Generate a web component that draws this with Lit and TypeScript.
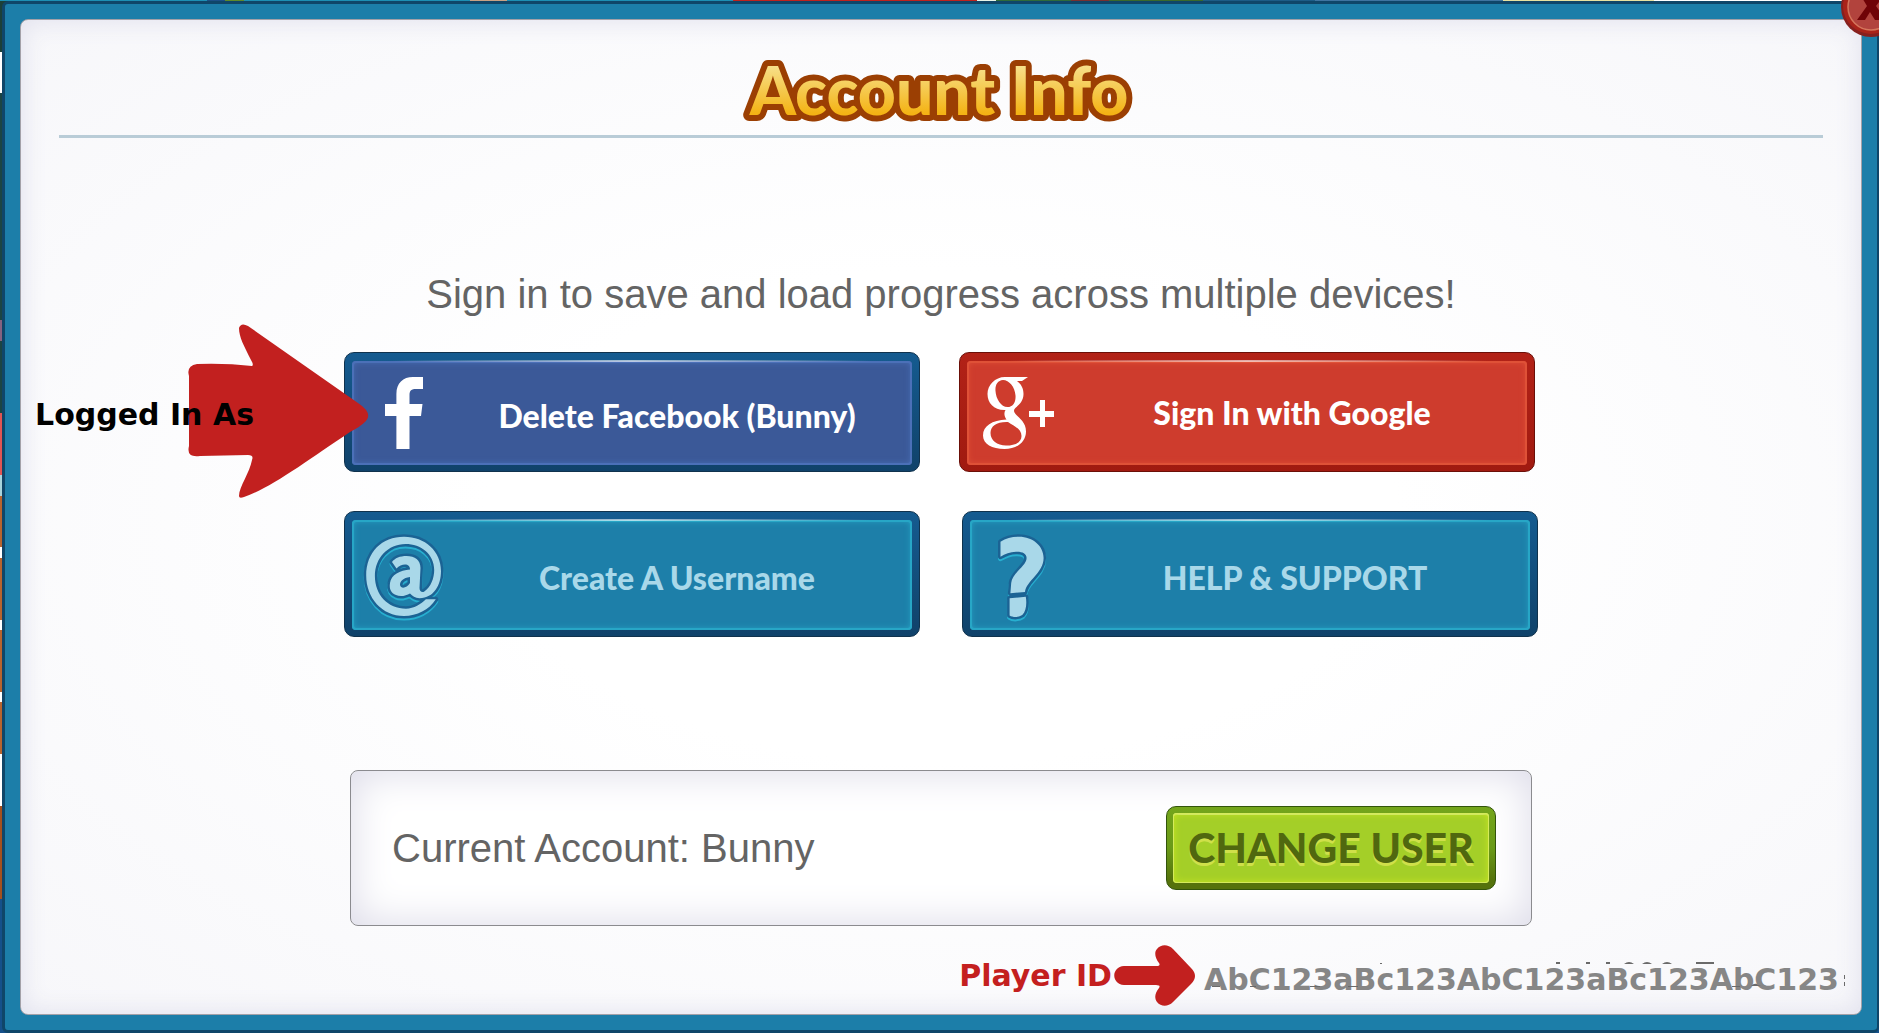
import { LitElement, html, css, svg, TemplateResult } from "lit";
import { customElement, property } from "lit/decorators.js";

const AT_SIGN =
  "M72.8 67.3C66 78 54 84 41 84C19 84 3.2 66 3.2 43.5C3.2 20 19 4.7 41 4.7C62 4.7 78 19 78 39C78 53 71 66 56.5 66.3C52 66 49.5 64 47 61.5C43 64 37 65 33 63C28 61 26 57 27 51C28 43 37 38 47 37.5C47 34 45 32.5 42 32.5C39 32.5 36 34 33.5 36.5L29 30C32 26 37 24 43.5 24C52 24 57.5 28 57.5 36L56.5 56C56.5 59 58.5 60.5 61 59.7C68 55 71.2 46 71.2 38C71.2 22 58 12 42.5 12C25 12 11.9 26 11.9 44C11.9 63 25 76.7 43 76.7C51 76.7 58 72 62.9 67.3ZM47 45C40 46 37 49 37 53C38 57.5 44 56 47 51Z";
const QUESTION =
  "M3.5 9.7C9 6 15 4.7 22 4.7C36 4.7 46.6 14 46.6 26C46.6 41 29 49 28 60L13.4 61.3L14.2 51C15 41 29.6 34 29.6 26C29.6 21.5 25 19.5 19 19.8C13 20 8 22 3.5 24.7ZM12.6 66.3L28.8 64.7C30 72 29 79 25.5 82.8C22.5 85.3 16 85.6 12.6 83.4Z";

function embossed(path: string, width: number) {
  return html`<svg width=${width} height="90" viewBox="0 0 ${width} 90" aria-hidden="true">
    ${svg`
      <g fill-rule="evenodd" stroke-linejoin="round">
        <path d=${path} transform="translate(0 2)" fill="none" stroke="#27afd0" stroke-width="5"/>
        <path d=${path} fill="#1d7fa9" stroke="#1b6394" stroke-width="5"/>
        <path d=${path} fill="#a9d8e9"/>
      </g>`}
  </svg>`;
}

const ICONS: Record<string, TemplateResult> = {
  facebook: html`<svg width="38" height="72" viewBox="0 0 38 72" aria-hidden="true">
    <path fill="#fff" d="M38 0V12H31C26.500 12 24.500 13.500 24.500 18V27H37.500L36 39H24.500V72H11.400V39H0V27H11.400V17C11.400 6 18 0 28 0Z"/>
  </svg>`,
  google: html`<svg width="72" height="72" viewBox="0 0 72 72" aria-hidden="true">
    <path fill="#fff" fill-rule="evenodd" d="M22 0H45L39 4H34C38 7 40.500 11 40.500 17C40.500 23 37 27 33.500 30C31 32 30.500 33.500 31.500 35.500C34 40 43 44 43 54.500C43 65 34 72 21.500 72C9 72 0 67 0 58.500C0 49 9 43 23.500 42.500C21.500 40 20.500 36 22.500 33C11 33.500 4.500 26 4.500 17C4.500 8 12 0 22 0ZM20 3C14.500 3.500 12 8 12.500 14C13 22 18 30 24.500 30C30 30 33 25 32.500 18.500C32 10 26 3 20 3ZM25 45C14 44.500 7.500 49 7.500 56C7.500 63.500 14 68.500 23 68.500C33 68.500 38.500 65 38.500 59C38.500 52 31 49 25 45Z"/>
    <path fill="#fff" d="M57 23H62V34H71V40H62V50H57V40H46V34H57Z"/>
  </svg>`,
  username: embossed(AT_SIGN, 82),
  help: embossed(QUESTION, 50),
};

@customElement("account-button")
class AccountButton extends LitElement {
  @property({ reflect: true }) kind = "facebook";
  @property() label = "";

  static styles = css`
    :host {
      display: block;
      flex: 1;
      --rim-top: #155b90;
      --rim-bottom: #10426a;
      --edge: #10324d;
      --face: #1d7fa9;
      --glow: #27a6c6;
      --ink: #a9d8e9;
    }
    :host([kind="facebook"]) {
      --face: #3b5998;
      --glow: #4b70b8;
      --ink: #fff;
    }
    :host([kind="google"]) {
      --rim-top: #b22217;
      --rim-bottom: #a01a10;
      --edge: #6b0f08;
      --face: #ce3c2d;
      --glow: #df5137;
      --ink: #fff;
    }
    .button {
      display: flex;
      box-sizing: border-box;
      width: 100%;
      height: 100%;
      min-height: 120px;
      margin: 0;
      padding: 8px 7px 6px;
      border: 1px solid var(--edge);
      border-radius: 10px;
      background: linear-gradient(var(--rim-top), var(--rim-bottom));
      color: var(--ink);
      font: 900 32px/40px Lato, "Liberation Sans", sans-serif;
      cursor: pointer;
    }
    .face {
      position: relative;
      display: flex;
      flex: 1;
      align-items: center;
      border-radius: 4px;
      background: var(--face);
      box-shadow: inset 0 0 0 2px var(--glow), inset 0 0 6px 1px var(--glow);
    }
    .face::before {
      content: "";
      position: absolute;
      inset: -1px 40px auto;
      height: 2px;
      background: linear-gradient(90deg, transparent, #ffffffa0, transparent);
    }
    .icon {
      display: flex;
      justify-content: center;
      width: 104px;
    }
    :host([kind="username"]) .icon,
    :host([kind="help"]) .icon {
      padding-top: 4px;
    }
    .label {
      flex: 1;
      padding: 6px 14px 0 0;
      text-align: center;
      white-space: nowrap;
    }
    :host([kind="google"]) .label {
      padding-top: 0;
    }
  `;

  render() {
    return html`<button class="button" type="button">
      <span class="face">
        <span class="icon">${ICONS[this.kind]}</span>
        <span class="label">${this.label}</span>
      </span>
    </button>`;
  }
}

@customElement("app-root")
class AppRoot extends LitElement {
  static styles = css`
    :host {
      display: block;
      font-family: "Liberation Sans", sans-serif;
      color: #646464;
    }
    .scene {
      display: flex;
      box-sizing: border-box;
      min-height: 100vh;
      padding: 1px 0 0 2px;
      overflow: hidden;
      background:
        linear-gradient(90deg, #1d8fb4 0 11%, #1c4f86 11% 12%, #5f8a2a 12% 13%, #1d8fb4 13% 25%, #c9a284 25% 27%, #1d8fb4 27% 39%, #c0231d 39% 52%, #e8f4e8 52% 53%, #2f6b3a 53% 57%, #7a3030 57% 59%, #3a6a2c 59% 64%, #1d5c86 64% 70%, #3f74a0 70% 80%, #e8e2a0 80% 88%, #fff 88%) top / 100% 1px no-repeat,
        linear-gradient(#1c4038 0 5%, #fff 5% 9%, #1c4543 9% 31%, #86627f 31% 33%, #1c4543 33% 40%, #e25553 40% 46%, #a8d4dc 46% 48%, #b8642f 48% 53%, #fff 53% 54%, #b8642f 54% 60%, #fff 60% 61%, #b8642f 61% 67%, #fff 67% 68%, #b8642f 68% 73%, #fff 73% 78%, #a5501d 78% 87%, #15508a 87%);
    }
    .frame {
      position: relative;
      display: flex;
      flex: 1;
      border: 3px solid #0f4669;
      border-right-width: 2px;
      border-radius: 6px;
      padding: 15px;
      background: #1c7ea9;
    }
    .panel {
      display: flex;
      flex: 1;
      flex-direction: column;
      align-items: center;
      min-width: 0;
      border: 1px solid #a3a1a8;
      border-radius: 8px;
      padding: 24px 22px 8px;
      background: radial-gradient(ellipse at center, #fff 35%, #f7f7fa 100%);
      box-shadow: inset 0 0 24px 2px #e2e2ee;
    }
    .title {
      margin: 0;
      height: 91px;
    }
    .title-art {
      display: block;
      overflow: visible;
    }
    .title-text {
      font: 900 66px Lato, "Liberation Sans", sans-serif;
      fill: url(#gold);
      stroke: #9b3f03;
      stroke-width: 12px;
      stroke-linejoin: round;
      paint-order: stroke;
      text-anchor: middle;
    }
    .rule {
      align-self: stretch;
      height: 3px;
      margin: 0 16px;
      border: 0;
      background: #b9ccd7;
    }
    .lead {
      margin: 132px 0 34px;
      font-size: 40px;
      line-height: 48px;
      text-align: center;
    }
    .choices {
      display: flex;
      flex-direction: column;
      gap: 39px;
      width: 100%;
      max-width: 1194px;
    }
    .row {
      display: flex;
      gap: 42px;
      min-height: 126px;
    }
    .row.social {
      position: relative;
      gap: 39px;
      min-height: 120px;
      padding-right: 3px;
    }
    .account {
      display: flex;
      align-items: center;
      justify-content: space-between;
      box-sizing: border-box;
      width: 100%;
      max-width: 1182px;
      min-height: 156px;
      margin: 133px 0 19px;
      padding: 0 35px 0 41px;
      border: 1px solid #8b8b8f;
      border-radius: 8px;
      background: #fff;
      box-shadow: inset 0 0 40px 2px #dcdbe8;
      font-size: 40px;
      line-height: 48px;
    }
    .change {
      box-sizing: border-box;
      min-width: 330px;
      padding: 6px;
      border: 1px solid #33540c;
      border-radius: 10px;
      background: linear-gradient(#74a51b, #6a9a18 50%, #55720c 90%);
      color: #50680f;
      font: 900 41px/66px Lato, "Liberation Sans", sans-serif;
      text-shadow: 0 3px 0 #cfe04a;
      cursor: pointer;
    }
    .change-face {
      display: block;
      padding: 2px 0;
      border-radius: 4px;
      background: #a4cf28;
      box-shadow: inset 0 0 0 1px #d5ea5c, inset 0 0 6px 2px #bfe022, inset 0 2px 0 #e8f4b0;
    }
    .note {
      font: bold 30px/36px "DejaVu Sans", sans-serif;
      white-space: nowrap;
    }
    .pointer {
      position: absolute;
      right: calc(100% - 26px);
      top: -28px;
      display: flex;
      align-items: center;
    }
    .pointer-text {
      position: relative;
      margin-right: -66px;
      padding-top: 6px;
      color: #000;
    }
    .player {
      display: flex;
      align-items: center;
      align-self: flex-end;
      margin-top: auto;
      gap: 2px;
      color: #c4201f;
    }
    .player-id {
      position: relative;
      margin-left: 7px;
      padding-top: 8px;
      color: #868686;
    }
    .specks {
      position: absolute;
      left: 0;
      top: 7px;
    }
    .close {
      position: absolute;
      top: -27px;
      right: -24px;
      width: 60px;
      height: 60px;
      padding: 0;
      border: 0;
      background: none;
      cursor: pointer;
    }
  `;

  render() {
    return html`<div class="scene">
      <section class="frame">
        <main class="panel">
          <h1 class="title">
            <svg class="title-art" width="440" height="90" viewBox="0 0 440 90">
              <defs>
                <linearGradient id="gold" x1="0" y1="0" x2="0" y2="1">
                  <stop offset="0.2" stop-color="#f7e08a"/>
                  <stop offset="0.8" stop-color="#f4b315"/>
                </linearGradient>
              </defs>
              <text class="title-text" x="218" y="71">Account Info</text>
            </svg>
          </h1>
          <hr class="rule" />
          <p class="lead">Sign in to save and load progress across multiple devices!</p>
          <div class="choices">
            <div class="row social">
              <account-button kind="facebook" label="Delete Facebook (Bunny)"></account-button>
              <account-button kind="google" label="Sign In with Google"></account-button>
              <div class="pointer">
                <span class="note pointer-text">Logged In As</span>
                <svg width="182" height="176" viewBox="0 0 182 176" aria-hidden="true">
                  <path fill="#c2201f" d="M1 52Q-2 42 9 40Q38 39 64 42Q66 41 63 36C56 22 51 13 51 4Q53 -2 60 2L170 79Q185 89 178 97Q172 103 162 108C120 136 83 164 56 173Q51 175 51 172C51 163 62 148 64 136Q66 131 60 131L12 132Q-2 134 1 122Z"/>
                </svg>
              </div>
            </div>
            <div class="row">
              <account-button kind="username" label="Create A Username"></account-button>
              <account-button kind="help" label="HELP &amp; SUPPORT"></account-button>
            </div>
          </div>
          <section class="account">
            <span>Current Account: Bunny</span>
            <button class="change" type="button"><span class="change-face">CHANGE USER</span></button>
          </section>
          <div class="player note">
            <span>Player ID</span>
            <svg width="81" height="61" viewBox="0 0 81 61" aria-hidden="true">
              <path fill="#c2201f" d="M10 21H42Q47 21 45 18C41 13 40 7 43 4C47 -1 54 -1 59 4L77 23Q85 31 77 39L59 57C54 62 47 62 43 57C40 53 41 48 45 43Q47 40 42 40H10C-3 39 -3 22 10 21Z"/>
            </svg>
            <span class="player-id">AbC123aBc123AbC123aBc123AbC123
              <svg class="specks" width="644" height="32" viewBox="0 0 644 32" aria-hidden="true">
                <path fill="#6a6a6a" d="M176 2h2v1h-2zM352 1h4v2h-4zM382 1h4v2h-4zM402 1h4v2h-4zM420 3q5-4 10 0zM438 3q5-4 10 0zM458 3q5-4 10 0zM492 1h18v2h-18zM8 25h8v1h-8zM46 25h6v1h-6zM106 25h10v1h-10zM144 25h10v1h-10zM528 25h8v1h-8zM547 25q4-4 7-1l3 1zM640 14h1v4h-1zM640 21h1v4h-1z"/>
              </svg>
            </span>
          </div>
        </main>
        <button class="close" type="button" aria-label="Close">
          <svg width="60" height="60" viewBox="0 0 60 60" aria-hidden="true">
            <circle cx="30" cy="30" r="30" fill="#86201f"/>
            <circle cx="30" cy="29" r="28" fill="#a9231a"/>
            <circle cx="30" cy="30" r="23" fill="#b2433d" stroke="#d5765c" stroke-width="1.500"/>
            <path fill="#700307" d="M17 14H27L31 23L37 14H46L35 29L45 43H34L29 35L24 43H16L26 29Z"/>
          </svg>
        </button>
      </section>
    </div>`;
  }
}
